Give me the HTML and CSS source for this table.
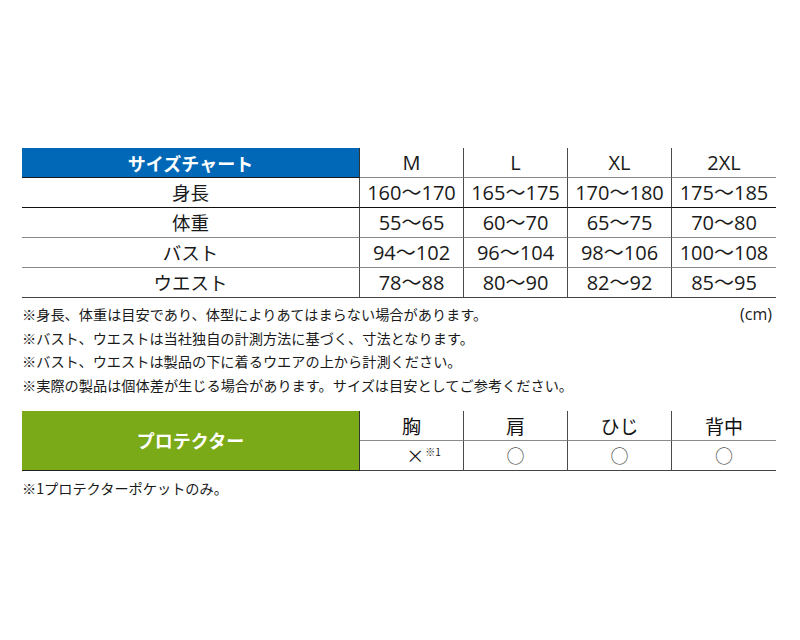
FILE: index.html
```html
<!DOCTYPE html>
<html lang="ja">
<head>
<meta charset="utf-8">
<title>サイズチャート</title>
<link rel="stylesheet" href="styles.css">
</head>
<body>
<div class="page">
  <table class="chart size-chart">
    <colgroup><col class="col-label"><col><col><col><col></colgroup>
    <tr class="head">
      <th class="title blue">サイズチャート</th>
      <th class="num">M</th>
      <th class="num">L</th>
      <th class="num">XL</th>
      <th class="num last">2XL</th>
    </tr>
    <tr class="row line-black">
      <th class="label">身長</th>
      <td class="num">160～170</td>
      <td class="num">165～175</td>
      <td class="num">170～180</td>
      <td class="num last">175～185</td>
    </tr>
    <tr class="row line-gray">
      <th class="label">体重</th>
      <td class="num">55～65</td>
      <td class="num">60～70</td>
      <td class="num">65～75</td>
      <td class="num last">70～80</td>
    </tr>
    <tr class="row line-gray">
      <th class="label">バスト</th>
      <td class="num">94～102</td>
      <td class="num">96～104</td>
      <td class="num">98～106</td>
      <td class="num last">100～108</td>
    </tr>
    <tr class="row line-dark">
      <th class="label">ウエスト</th>
      <td class="num">78～88</td>
      <td class="num">80～90</td>
      <td class="num">82～92</td>
      <td class="num last">85～95</td>
    </tr>
  </table>

  <div class="notes">
    <div class="note-first">
      <p>※身長、体重は目安であり、体型によりあてはまらない場合があります。</p>
      <span class="unit">(cm)</span>
    </div>
    <p>※バスト、ウエストは当社独自の計測方法に基づく、寸法となります。</p>
    <p>※バスト、ウエストは製品の下に着るウエアの上から計測ください。</p>
    <p>※実際の製品は個体差が生じる場合があります。サイズは目安としてご参考ください。</p>
  </div>

  <table class="chart protector">
    <colgroup><col class="col-label"><col><col><col><col></colgroup>
    <tr class="head">
      <th class="title green" rowspan="2">プロテクター</th>
      <th class="part">胸</th>
      <th class="part">肩</th>
      <th class="part">ひじ</th>
      <th class="part last">背中</th>
    </tr>
    <tr class="row line-dark">
      <td class="mark cross">×<sup class="ref">※1</sup></td>
      <td class="mark">○</td>
      <td class="mark">○</td>
      <td class="mark last">○</td>
    </tr>
  </table>

  <p class="footnote">※1プロテクターポケットのみ。</p>
</div>
</body>
</html>
```

FILE: styles.css
```css
html, body {
  margin: 0;
  background: #ffffff;
}

body {
  font-family: "Open Sans", "Noto Sans CJK JP", sans-serif;
  color: #1c1c1c;
}

.page {
  padding: 148px 24px 0 22px;
}

.chart {
  border-collapse: separate;
  border-spacing: 0;
  table-layout: fixed;
  width: 754px;
}

.col-label {
  width: 338px;
}

.chart th,
.chart td {
  box-sizing: border-box;
  padding: 0;
  height: 30px;
  text-align: center;
  vertical-align: middle;
  font-weight: normal;
  border-right: 1px solid #4a4a4a;
  line-height: 1;
}

.chart .last {
  border-right: none;
}

.chart .title {
  color: #ffffff;
  font-family: "Noto Sans CJK JP", sans-serif;
  font-weight: bold;
  font-size: 18px;
  border-right: 1px solid #333333;
}

.blue {
  background: #0068b7;
}

.chart .green {
  height: 60px;
  background: #7aaa17;
  border-bottom: 1px solid #222222;
}

.size-chart .head th {
  border-bottom: 1px solid #8a8a8a;
}

.size-chart .head .title {
  border-bottom: 1px solid #1a1a1a;
}

.num {
  font-size: 20px;
  color: #1a1a1a;
}

.label {
  font-family: "Noto Sans CJK JP", sans-serif;
  font-size: 18.5px;
  color: #1a1a1a;
}

.line-black th,
.line-black td {
  border-bottom: 1px solid #111111;
}

.line-gray th,
.line-gray td {
  border-bottom: 1px solid #8a8a8a;
}

.line-dark th,
.line-dark td {
  border-bottom: 1px solid #444444;
}

.notes {
  margin-top: 5px;
  font-family: "Noto Sans CJK JP", sans-serif;
  font-size: 14.2px;
  line-height: 23.7px;
  color: #1a1a1a;
  width: 753px;
}

.notes p {
  margin: 0;
}

.note-first {
  display: flex;
  justify-content: space-between;
  align-items: baseline;
}

.unit {
  font-family: "Open Sans", sans-serif;
  font-size: 16px;
  padding-right: 3px;
}

.protector {
  margin-top: 13px;
}

.protector .head .part {
  font-family: "Noto Sans CJK JP", sans-serif;
  font-size: 19px;
  color: #111111;
  border-bottom: 1px solid #8a8a8a;
}

.mark {
  font-family: "Noto Sans CJK JP", sans-serif;
  font-size: 18px;
  color: #555555;
}

.chart .cross {
  color: #1a1a1a;
  padding-left: 24px;
}

.ref {
  font-size: 10px;
  vertical-align: 7px;
  margin-left: 1px;
}

.footnote {
  margin: 6px 0 0;
  font-family: "Noto Sans CJK JP", sans-serif;
  font-size: 14.2px;
  line-height: 23.7px;
  color: #1a1a1a;
}
```
